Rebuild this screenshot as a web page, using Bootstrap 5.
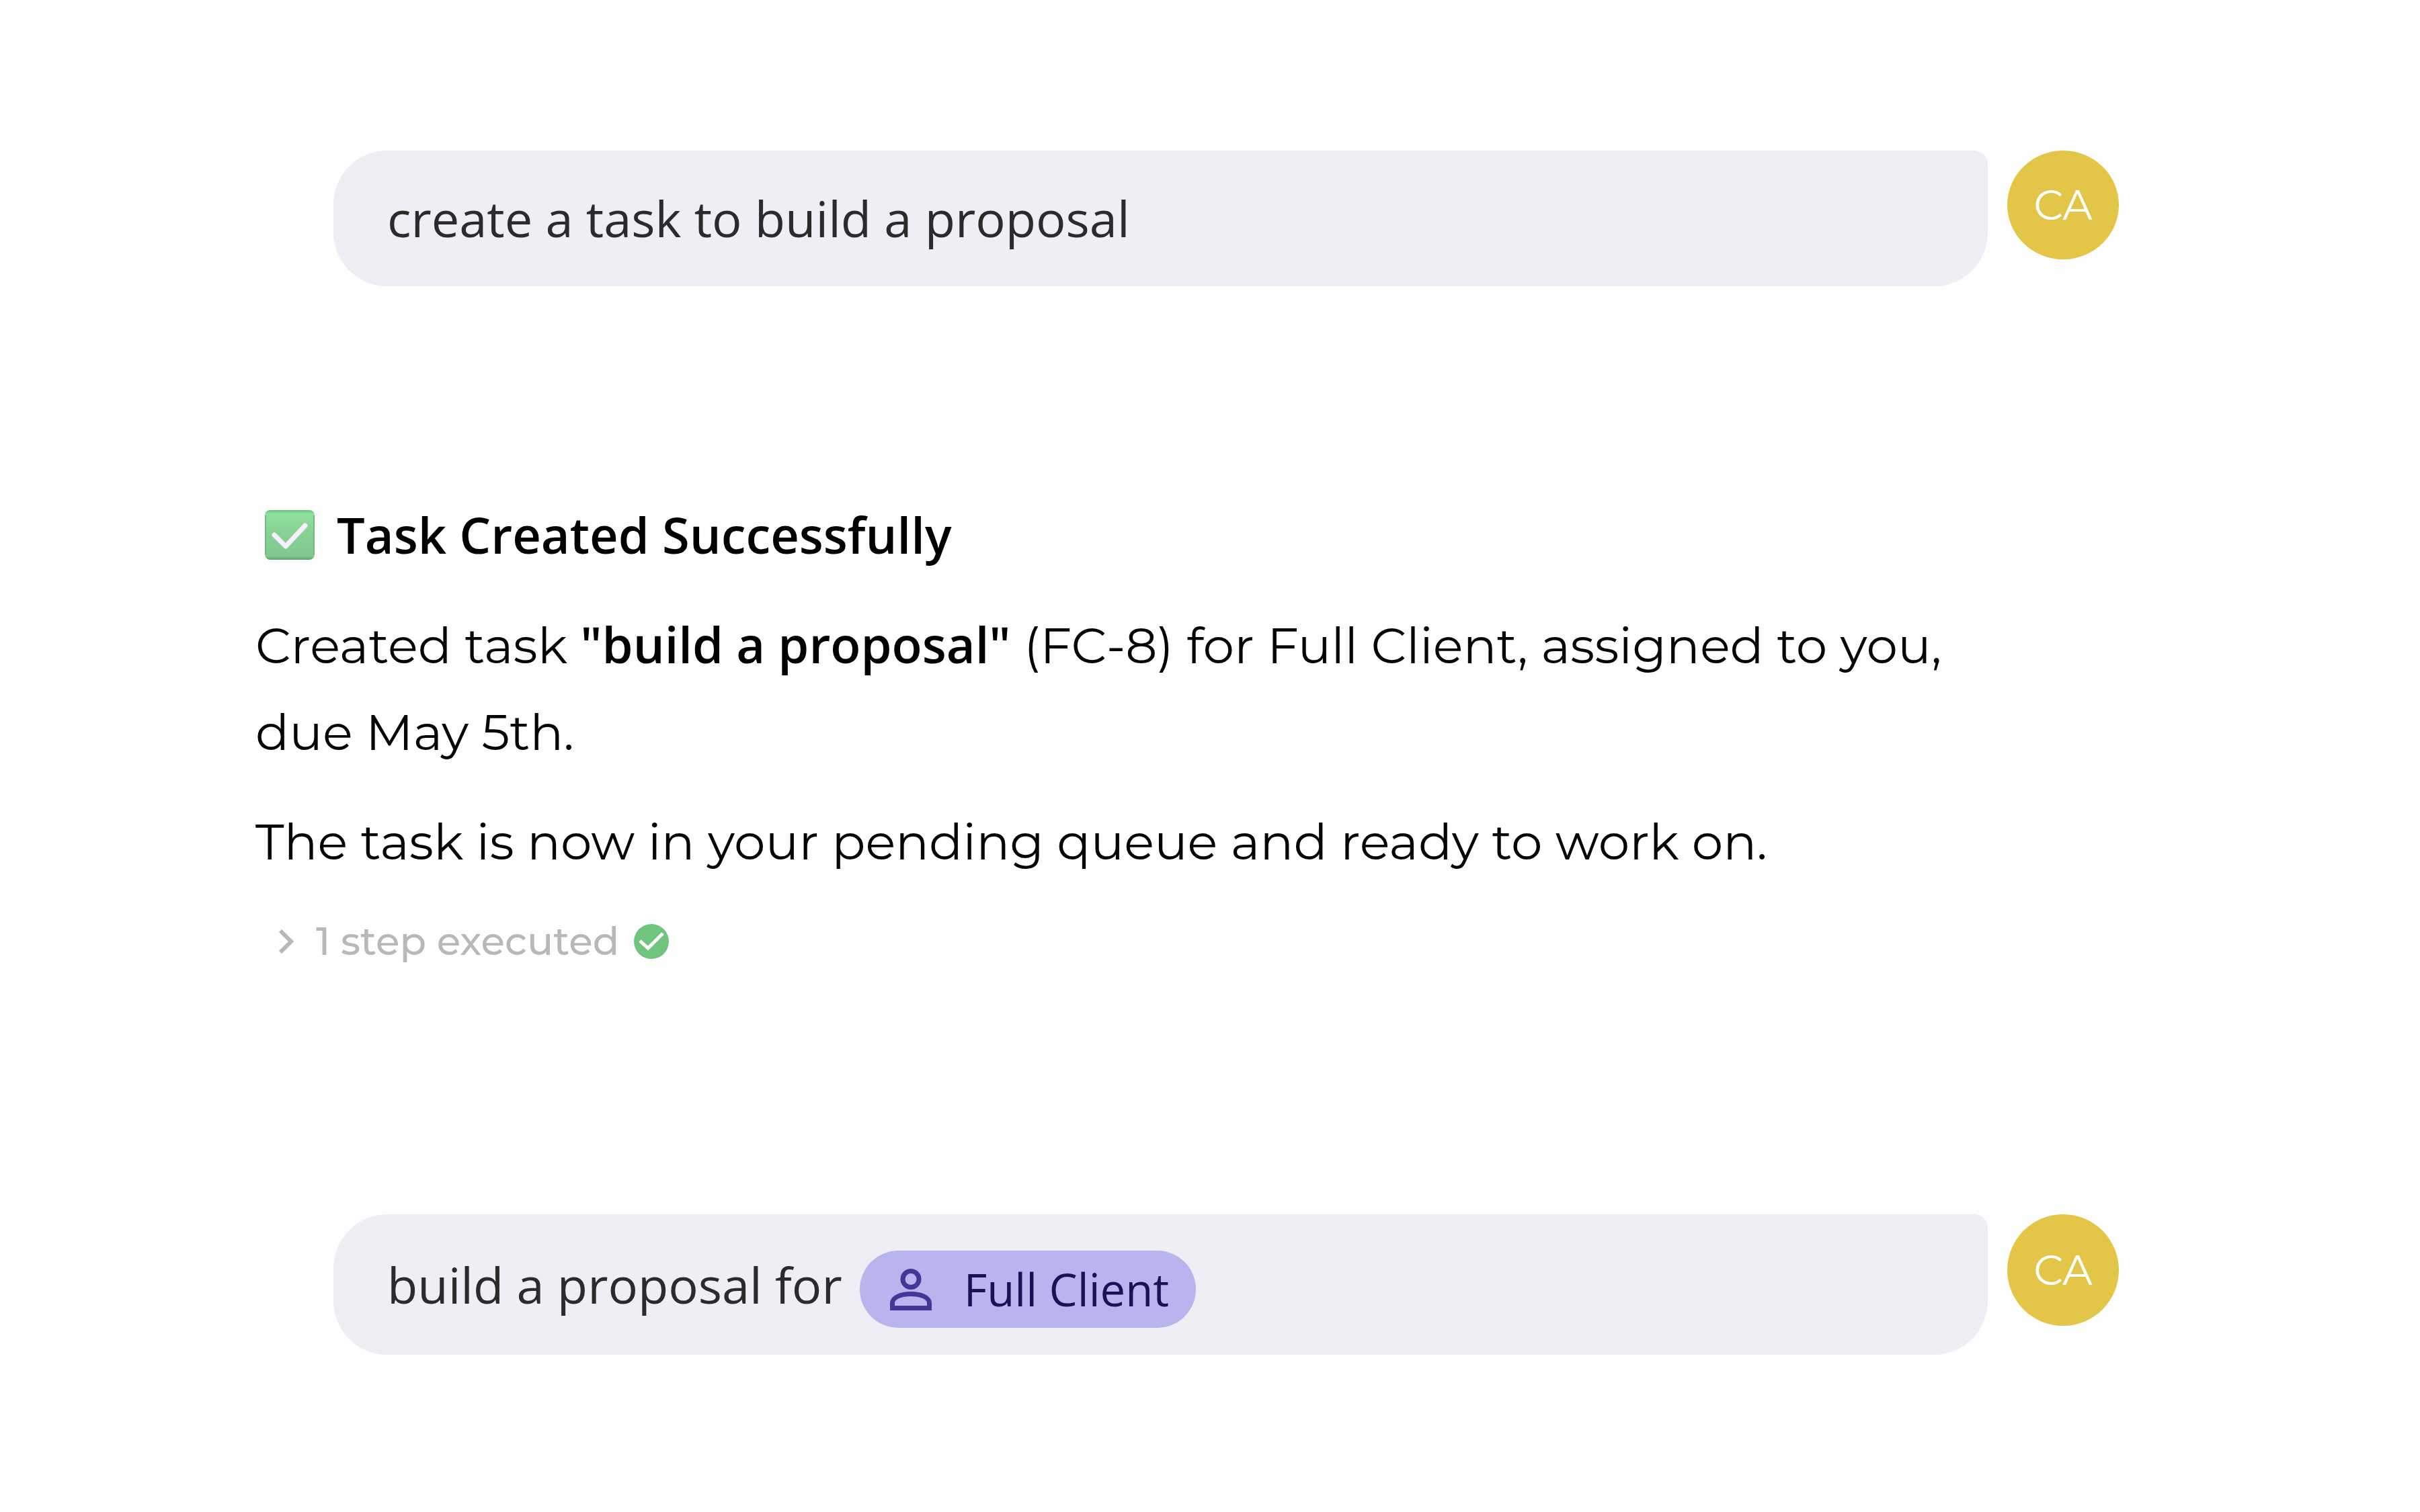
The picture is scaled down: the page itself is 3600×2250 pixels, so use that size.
<!DOCTYPE html>
<html lang="en">
<head>
<meta charset="utf-8">
<meta name="viewport" content="width=device-width, initial-scale=1">
<title>Task assistant chat</title>
<link href="https://cdn.jsdelivr.net/npm/bootstrap@5.3.0/dist/css/bootstrap.min.css" rel="stylesheet">
<style>
  body { background: #fefefe; color: #050505; font-family: "Montserrat", "Inter", sans-serif; }
  .chat-thread { padding: 224px 448px 224px 380px; }
  .user-turn { gap: 29px; padding-left: 116px; }
  .user-bubble { background: #efeef5; color: #2b2b2b; border-radius: 80px 20px 80px 80px; padding: 49px 80px; font-family: "Open Sans", sans-serif; font-size: 74px; line-height: 104px; min-width: 0; }
  .bubble-with-chip { padding-top: 40px; padding-bottom: 40px; gap: 26px; }
  .user-avatar { width: 166px; height: 166px; background: #e3c547; color: #fff; font-size: 62px; }
  .avatar-short { height: 162px; }
  .client-chip { background: #b8b5ee; color: #1a1259; font-size: 67px; font-weight: 500; line-height: 115px; gap: 48px; margin-top: 14px; padding: 0 40px 0 45px; }
  .client-chip:hover { color: #1a1259; }
  .assistant-turn { margin: 305px 195px 370px 0; font-size: 74px; line-height: 129px; }
  .assistant-turn p, .assistant-turn h2 { margin-bottom: 34px; }
  .assistant-turn h2, .assistant-turn strong { font-family: "Open Sans", sans-serif; font-size: 74px; font-weight: 600; color: #000; }
  .assistant-turn h2 { line-height: 129px; gap: 33px; padding-left: 14px; }
  .step-toggle { color: #b8b8b8; font-size: 58px; font-weight: 500; line-height: 72px; gap: 22px; margin-top: 48px; padding: 0 0 0 34px; }
  .step-toggle span { padding-left: 10px; }
  svg { flex: none; }
</style>
</head>
<body>
<main class="chat-thread">
  <section class="user-turn d-flex align-items-start">
    <div class="user-bubble flex-grow-1">create a task to build a proposal</div>
    <div class="user-avatar avatar-short rounded-circle d-flex align-items-center justify-content-center">CA</div>
  </section>

  <article class="assistant-turn">
    <h2 class="d-flex align-items-center">
      <svg width="74" height="74" viewBox="0 0 74 74" aria-hidden="true">
        <defs><linearGradient id="tick-face" x1="0" y1="0" x2="0" y2="1"><stop offset="0" stop-color="#70bd83"/><stop offset=".08" stop-color="#8fe09d"/><stop offset=".5" stop-color="#86d094"/><stop offset=".93" stop-color="#80c890"/><stop offset="1" stop-color="#649e71"/></linearGradient></defs>
        <rect width="74" height="74" rx="8" fill="url(#tick-face)"/>
        <path d="M1 8v58M73 8v58" stroke="#72b681" stroke-width="2"/>
        <path d="M14 37 31 54 60 23" fill="none" stroke="#f8effc" stroke-width="7" stroke-linecap="round" stroke-linejoin="round"/>
      </svg>
      Task Created Successfully
    </h2>
    <p>Created task <strong>"build a proposal"</strong> (FC-8) for Full Client, assigned to you, due May 5th.</p>
    <p class="mb-0">The task is now in your pending queue and ready to work on.</p>
    <button type="button" class="step-toggle btn border-0 d-flex align-items-center">
      <svg width="24" height="36" viewBox="0 0 24 36" aria-hidden="true"><path d="M3 2 19 18 3 34" fill="none" stroke="currentColor" stroke-width="6"/></svg>
      <span>1 step executed</span>
      <svg width="52" height="52" viewBox="0 0 52 52" aria-hidden="true"><circle cx="26" cy="26" r="26" fill="#6fc57b"/><path d="M9 25 21 36 43 14" fill="none" stroke="#fff" stroke-width="5"/></svg>
    </button>
  </article>

  <section class="user-turn d-flex align-items-start">
    <div class="user-bubble bubble-with-chip flex-grow-1 d-flex align-items-center">
      <span>build a proposal for</span>
      <a href="#" class="client-chip rounded-pill d-inline-flex align-items-center text-decoration-none">
        <svg width="62" height="62" viewBox="0 0 62 62" aria-hidden="true"><g fill="none" stroke="#403797" stroke-width="7"><circle cx="31" cy="15.500" r="12"/><path d="M3.500 58.500V51C3.500 33 58.500 33 58.500 51V58.500Z"/></g></svg>
        Full Client
      </a>
    </div>
    <div class="user-avatar rounded-circle d-flex align-items-center justify-content-center">CA</div>
  </section>
</main>
<script src="https://cdn.jsdelivr.net/npm/bootstrap@5.3.0/dist/js/bootstrap.bundle.min.js"></script>
</body>
</html>
